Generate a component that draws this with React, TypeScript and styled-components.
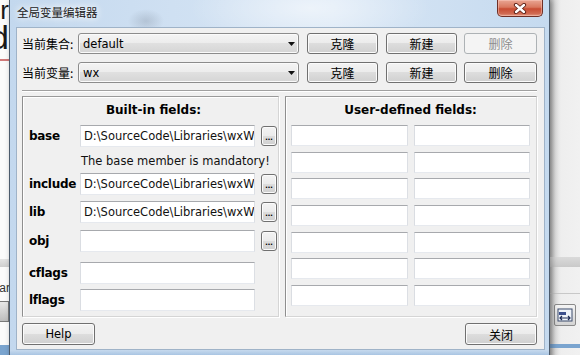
import React from "react";
import styled, { createGlobalStyle } from "styled-components";

const Global = createGlobalStyle`
  html, body { margin: 0; padding: 0; }
  body {
    width: 580px; height: 355px; overflow: hidden; background: #efefef;
    font-family: "DejaVu Sans", "Noto Sans CJK SC", sans-serif;
  }
`;

const UI = `"DejaVu Sans", "Noto Sans CJK SC", sans-serif`;

const Desktop = styled.div`
  position: relative;
  width: 580px;
  height: 355px;
  overflow: hidden;
  background: #efefef;
`;

/* ---------- background app fragments (left) ---------- */
const LeftBackdrop = styled.div`
  position: absolute;
  left: 0;
  top: 0;
  width: 10px;
  height: 355px;
  display: flex;
  flex-direction: column;
  background: #fbfbfb;
  overflow: hidden;
`;

const Glyph = styled.div<{ $h: number; $size: number }>`
  height: ${(p) => p.$h}px;
  overflow: hidden;
  font-family: "Liberation Sans", sans-serif;
  font-size: ${(p) => p.$size}px;
  line-height: ${(p) => p.$h}px;
  color: #1a1a1a;
  text-align: right;
  white-space: nowrap;
  direction: rtl;
  padding-right: 1px;
`;

const RedRule = styled.div`
  height: 2px;
  margin-top: 6px;
  background: #d07a7a;
`;

const Band = styled.div<{ $h: number; $bg: string; $mt?: number }>`
  height: ${(p) => p.$h}px;
  margin-top: ${(p) => p.$mt ?? 0}px;
  background: ${(p) => p.$bg};
`;

const SmallText = styled.div`
  height: 14px;
  margin-top: 14px;
  font-family: "Liberation Sans", sans-serif;
  font-size: 12px;
  line-height: 14px;
  color: #333;
  white-space: nowrap;
  direction: rtl;
`;

const BoxFragment = styled.div`
  height: 20px;
  margin-top: 6px;
  width: 8px;
  background: linear-gradient(#e8e8e8, #bdbdbd);
  border: 1px solid #7a7a7a;
  border-left: none;
`;

/* ---------- background (right) ---------- */
const RightBackdrop = styled.div`
  position: absolute;
  left: 550px;
  top: 0;
  width: 30px;
  height: 355px;
  display: flex;
  flex-direction: column;
  background: linear-gradient(to right, #b9b9b9 0px, #dcdcdc 5px, #eeeeee 11px, #f1f1f1 100%);
`;

const IconTile = styled.div`
  margin: 10px 0 0 4px;
  width: 20px;
  height: 20px;
  border: 1px solid #8a8a8a;
  border-radius: 2px;
  background: linear-gradient(#f4f4f4, #d4d4d4);
  display: flex;
  align-items: center;
  justify-content: center;
`;

/* ---------- window ---------- */
const Window = styled.div`
  position: absolute;
  left: 9px;
  top: 0;
  width: 541px;
  height: 362px;
  box-sizing: border-box;
  border-left: 1px solid #4c5b6c;
  border-right: 1px solid #4c5b6c;
  display: flex;
  flex-direction: column;
  background:
    radial-gradient(ellipse 18px 12px at 136px 21px, rgba(90, 100, 115, 0.22), rgba(90, 100, 115, 0) 100%),
    radial-gradient(ellipse 120px 40px at 300px 8px, rgba(255, 255, 255, 0.55), rgba(255, 255, 255, 0) 100%),
    linear-gradient(to right, #c3d8ee 0%, #cfe0f2 30%, #d8e6f5 60%, #c5daef 100%);
  box-shadow: 2px 0 6px rgba(0, 0, 0, 0.35);
`;

const TitleBar = styled.div`
  height: 27px;
  flex: none;
  display: flex;
  align-items: flex-start;
  padding-left: 7px;
`;

const Title = styled.div`
  margin-top: 5px;
  font-family: "Noto Sans CJK SC", sans-serif;
  font-size: 11.5px;
  line-height: 15px;
  color: #1b1b1b;
  text-shadow: 0 0 6px #fff, 0 0 10px rgba(255, 255, 255, 0.9);
`;

const CloseButton = styled.div`
  margin-left: auto;
  margin-right: 6px;
  width: 46px;
  height: 17px;
  box-sizing: border-box;
  border: 1px solid #6e2f26;
  border-top: none;
  border-radius: 0 0 5px 5px;
  background: linear-gradient(#e9a693 0%, #d9785f 45%, #c84c32 55%, #d06a52 85%, #e39a83 100%);
  box-shadow: inset 0 0 0 1px rgba(255, 210, 200, 0.45);
  display: flex;
  align-items: center;
  justify-content: center;
`;

const FrameBody = styled.div`
  display: flex;
  flex: none;
  padding-left: 6px;
  padding-right: 4px;
`;

const Client = styled.div`
  width: 529px;
  height: 323px;
  box-sizing: border-box;
  border: 1px solid #9fb3c8;
  background: #f0f0f0;
  padding: 5px 7px 4px 5px;
  display: flex;
  flex-direction: column;
  font-family: ${UI};
  color: #000;
`;

const BottomFrame = styled.div`
  flex: 1;
  background: linear-gradient(#c7daee, #7ea6d2);
`;

const Row = styled.div<{ $mt?: number }>`
  display: flex;
  align-items: center;
  height: 21px;
  margin-top: ${(p) => p.$mt ?? 0}px;
`;

const RowLabel = styled.div`
  width: 56px;
  flex: none;
  font-family: "Noto Sans CJK SC", sans-serif;
  font-size: 12px;
  line-height: 21px;
  white-space: nowrap;
`;

const Combo = styled.div`
  flex: 1;
  height: 21px;
  box-sizing: border-box;
  border: 1px solid #8c8c8c;
  border-radius: 3px;
  background: linear-gradient(#f4f4f4 0%, #ececec 50%, #e0e0e0 50%, #d5d5d5 100%);
  box-shadow: inset 0 0 0 1px #fafafa;
  display: flex;
  align-items: center;
  padding: 0 3px 0 4px;
  font-size: 11.5px;
`;

const ComboText = styled.span`
  flex: 1;
`;

const btnFace = `
  box-sizing: border-box;
  border: 1px solid #707070;
  border-radius: 3px;
  background: linear-gradient(#f3f3f3 0%, #ebebeb 50%, #dddddd 50%, #d0d0d0 100%);
  box-shadow: inset 0 0 0 1px #fbfbfb;
  display: flex;
  align-items: center;
  justify-content: center;
  color: #000;
`;

const Button = styled.div<{ $w?: number; $ml?: number; $disabled?: boolean }>`
  ${btnFace}
  flex: none;
  width: ${(p) => p.$w ?? 72}px;
  height: 21px;
  margin-left: ${(p) => p.$ml ?? 0}px;
  font-family: "Noto Sans CJK SC", ${UI};
  font-size: 12px;
  ${(p) =>
    p.$disabled &&
    `
    border-color: #adb2b5;
    background: #f4f4f4;
    color: #8d8d8d;
    box-shadow: none;
  `}
`;

const FooterButton = styled(Button)`
  height: 22px;
  font-family: ${UI};
  font-size: 11.5px;
`;

const FooterCnButton = styled(FooterButton)`
  font-family: "Noto Sans CJK SC", sans-serif;
  font-size: 12px;
`;

const Separator = styled.div`
  margin-top: 7px;
  height: 1px;
  background: #a0a0a0;
  border-bottom: 1px solid #ffffff;
  flex: none;
`;

const Groups = styled.div`
  margin-top: 4px;
  height: 221px;
  flex: none;
  display: grid;
  grid-template-columns: 257px 1fr;
  column-gap: 6px;
`;

const GroupBox = styled.div<{ $pl: number }>`
  box-sizing: border-box;
  border: 1px solid;
  border-color: #9a9a9a #d5d5d5 #d5d5d5 #8e8e8e;
  box-shadow: inset 1px 1px 0 #ffffff, 1px 1px 0 #ffffff;
  padding: 5px 0 0 ${(p) => p.$pl}px;
  display: flex;
  flex-direction: column;
`;

const GroupTitle = styled.div<{ $shift?: number }>`
  font-weight: bold;
  font-size: 12px;
  line-height: 16px;
  text-align: center;
  padding-right: ${(p) => p.$shift ?? 0}px;
`;

const FieldRow = styled.div<{ $mt: number }>`
  display: grid;
  grid-template-columns: 51px 175px 22px;
  align-items: center;
  height: 22px;
  margin-top: ${(p) => p.$mt}px;
`;

const FieldLabel = styled.div`
  font-weight: bold;
  font-size: 12px;
  letter-spacing: -0.3px;
  line-height: 22px;
  white-space: nowrap;
`;

const inputFace = `
  box-sizing: border-box;
  background: #ffffff;
  border: 1px solid;
  border-color: #a7a9ad #dcdfe4 #e6e9ee #dadde2;
  outline: none;
  margin: 0;
`;

const TextInput = styled.input`
  ${inputFace}
  width: 175px;
  height: 22px;
  padding: 0 0 0 3px;
  font-family: ${UI};
  font-size: 11.5px;
  color: #111;
`;

const BrowseButton = styled.div`
  ${btnFace}
  width: 16px;
  height: 20px;
  margin-left: 6px;
  align-items: flex-end;
  padding-bottom: 4px;
  overflow: hidden;
  font-family: "Liberation Sans", sans-serif;
  font-size: 9px;
  line-height: 8px;
  font-weight: bold;
`;

const Message = styled.div`
  height: 26px;
  padding-left: 52px;
  padding-top: 2px;
  box-sizing: border-box;
  font-size: 11.5px;
  line-height: 24px;
  white-space: nowrap;
  color: #111;
`;

const UserGrid = styled.div`
  margin-top: 7px;
  display: grid;
  grid-template-columns: 117px 116px;
  grid-auto-rows: 21px;
  column-gap: 6px;
  row-gap: 5.67px;
`;

const UserCell = styled.input`
  ${inputFace}
  width: 100%;
  height: 21px;
  padding: 0 3px;
  font-family: ${UI};
  font-size: 11.5px;
`;

const Footer = styled.div`
  margin-top: 6px;
  display: flex;
  justify-content: space-between;
  flex: none;
`;

const Arrow = () => (
  <svg width="7" height="4" viewBox="0 0 7 4">
    <path d="M0 0 H7 L3.5 4 Z" fill="#111" />
  </svg>
);

const CloseGlyph = () => (
  <svg width="14" height="11" viewBox="0 0 14 11">
    <path d="M3 2 L11 9 M11 2 L3 9" stroke="#5a1d14" strokeWidth="4.2" strokeLinecap="round" fill="none" />
    <path d="M3 2 L11 9 M11 2 L3 9" stroke="#ffffff" strokeWidth="2.4" strokeLinecap="round" fill="none" />
  </svg>
);

const TinyIcon = () => (
  <svg width="16" height="16" viewBox="0 0 16 16">
    <rect x="1" y="2" width="14" height="12" fill="#eef2f8" stroke="#3b4a6b" strokeWidth="1" />
    <rect x="2" y="5" width="7" height="3" fill="#3b4f8c" />
    <path d="M3 11 H13 M5 9 L3 11 L5 13 M11 9 L13 11 L11 13" stroke="#1e2c55" strokeWidth="1.2" fill="none" />
  </svg>
);

const builtIn = [
  { label: "base", value: "D:\\SourceCode\\Libraries\\wxWidgets", browse: true, mt: 7 },
  { label: "include", value: "D:\\SourceCode\\Libraries\\wxWidgets", browse: true, mt: 0 },
  { label: "lib", value: "D:\\SourceCode\\Libraries\\wxWidgets", browse: true, mt: 6 },
  { label: "obj", value: "", browse: true, mt: 7 },
  { label: "cflags", value: "", browse: false, mt: 10 },
  { label: "lflags", value: "", browse: false, mt: 5 },
];

export default function App() {
  return (
    <Desktop>
      <Global />
      <LeftBackdrop>
        <Glyph $h={20} $size={26}>r</Glyph>
        <Glyph $h={34} $size={34}>d</Glyph>
        <RedRule />
        <Band $h={8} $bg="linear-gradient(#e4e4e4,#cfcfcf)" $mt={198} />
        <SmallText>ar</SmallText>
        <BoxFragment />
        <Band $h={10} $bg="#7aa4cf" $mt={23} />
      </LeftBackdrop>

      <RightBackdrop>
        <Band $h={10} $bg="linear-gradient(#dadada,#c9c9c9)" $mt={257} />
        <Band $h={1} $bg="#c8c8c8" $mt={26} />
        <IconTile>
          <TinyIcon />
        </IconTile>
        <Band $h={4} $bg="#7aa4cf" $mt={18} />
      </RightBackdrop>

      <Window>
        <TitleBar>
          <Title>全局变量编辑器</Title>
          <CloseButton>
            <CloseGlyph />
          </CloseButton>
        </TitleBar>
        <FrameBody>
          <Client>
            <Row>
              <RowLabel>当前集合:</RowLabel>
              <Combo>
                <ComboText>default</ComboText>
                <Arrow />
              </Combo>
              <Button $ml={8} $w={71}>克隆</Button>
              <Button $ml={8} $w={71}>新建</Button>
              <Button $ml={7} $w={73} $disabled>删除</Button>
            </Row>
            <Row $mt={8}>
              <RowLabel>当前变量:</RowLabel>
              <Combo>
                <ComboText>wx</ComboText>
                <Arrow />
              </Combo>
              <Button $ml={8} $w={71}>克隆</Button>
              <Button $ml={8} $w={71}>新建</Button>
              <Button $ml={7} $w={73}>删除</Button>
            </Row>
            <Separator />
            <Groups>
              <GroupBox $pl={6}>
                <GroupTitle>Built-in fields:</GroupTitle>
                {builtIn.map((f, i) => (
                  <React.Fragment key={f.label}>
                    <FieldRow $mt={f.mt}>
                      <FieldLabel>{f.label}</FieldLabel>
                      <TextInput readOnly value={f.value} />
                      {f.browse ? <BrowseButton>...</BrowseButton> : <span />}
                    </FieldRow>
                    {i === 0 && <Message>The base member is mandatory!</Message>}
                  </React.Fragment>
                ))}
              </GroupBox>
              <GroupBox $pl={5}>
                <GroupTitle $shift={6}>User-defined fields:</GroupTitle>
                <UserGrid>
                  {Array.from({ length: 14 }).map((_, i) => (
                    <UserCell key={i} readOnly value="" />
                  ))}
                </UserGrid>
              </GroupBox>
            </Groups>
            <Footer>
              <FooterButton $w={73}>Help</FooterButton>
              <FooterCnButton $w={72}>关闭</FooterCnButton>
            </Footer>
          </Client>
        </FrameBody>
        <BottomFrame />
      </Window>
    </Desktop>
  );
}
